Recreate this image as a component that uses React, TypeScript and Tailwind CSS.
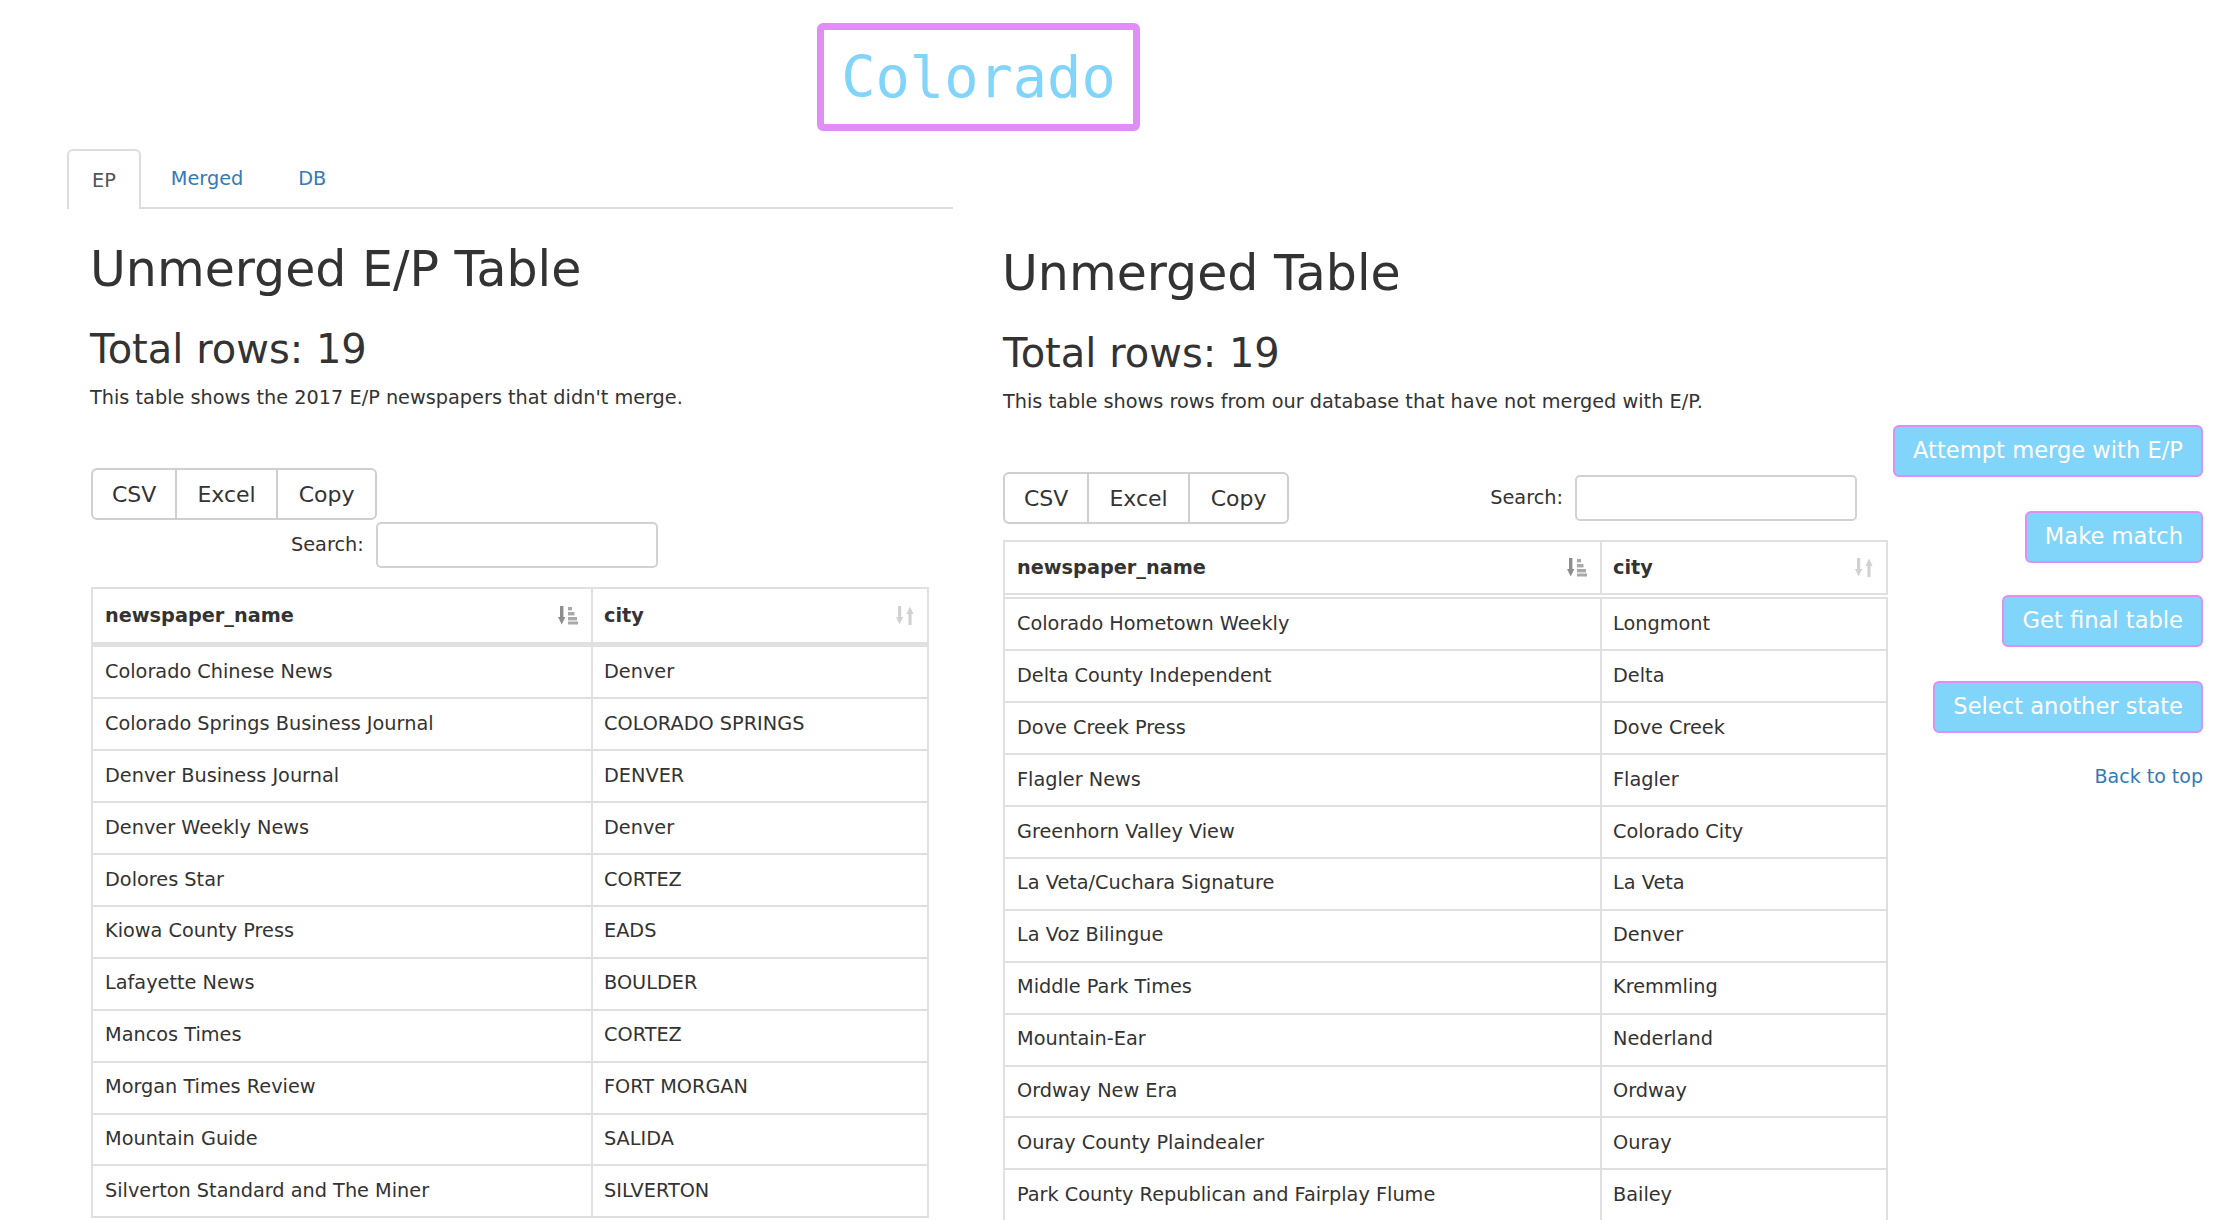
import React from "react";

const leftRows = [
  ["Colorado Chinese News", "Denver"],
  ["Colorado Springs Business Journal", "COLORADO SPRINGS"],
  ["Denver Business Journal", "DENVER"],
  ["Denver Weekly News", "Denver"],
  ["Dolores Star", "CORTEZ"],
  ["Kiowa County Press", "EADS"],
  ["Lafayette News", "BOULDER"],
  ["Mancos Times", "CORTEZ"],
  ["Morgan Times Review", "FORT MORGAN"],
  ["Mountain Guide", "SALIDA"],
  ["Silverton Standard and The Miner", "SILVERTON"],
];

const rightRows = [
  ["Colorado Hometown Weekly", "Longmont"],
  ["Delta County Independent", "Delta"],
  ["Dove Creek Press", "Dove Creek"],
  ["Flagler News", "Flagler"],
  ["Greenhorn Valley View", "Colorado City"],
  ["La Veta/Cuchara Signature", "La Veta"],
  ["La Voz Bilingue", "Denver"],
  ["Middle Park Times", "Kremmling"],
  ["Mountain-Ear", "Nederland"],
  ["Ordway New Era", "Ordway"],
  ["Ouray County Plaindealer", "Ouray"],
  ["Park County Republican and Fairplay Flume", "Bailey"],
];

const SortAscIcon = () => (
  <svg width="20" height="19" viewBox="0 0 20 19">
    <rect x="2" y="0" width="3.4" height="12" fill="#8e8e8e" />
    <polygon points="0,11 7.4,11 3.7,18.5" fill="#8e8e8e" />
    <rect x="10" y="1" width="4" height="3.4" fill="#a9a9a9" />
    <rect x="10" y="6" width="6.5" height="3.4" fill="#a9a9a9" />
    <rect x="10" y="11" width="9" height="3.4" fill="#a9a9a9" />
    <rect x="10" y="15.5" width="10" height="3" fill="#a9a9a9" />
  </svg>
);

const SortBothIcon = () => (
  <svg width="18" height="19" viewBox="0 0 18 19">
    <rect x="2" y="0" width="3.2" height="12" fill="#d2d2d2" />
    <polygon points="0,11 7.2,11 3.6,18.5" fill="#d2d2d2" />
    <rect x="12.4" y="7" width="3.2" height="12" fill="#d2d2d2" />
    <polygon points="10.4,8 17.6,8 14,0.5" fill="#d2d2d2" />
  </svg>
);

const ExportButtons = () => (
  <div className="flex h-[52px] w-fit rounded-[6px] border-2 border-[#cfcfcf] bg-white text-[22px] text-[#333]">
    <button className="px-[19px] border-r-2 border-[#cfcfcf]">CSV</button>
    <button className="px-[20px] border-r-2 border-[#cfcfcf]">Excel</button>
    <button className="px-[21px]">Copy</button>
  </div>
);

const Search = () => (
  <div className="flex items-center gap-[12px]">
    <span className="text-[19.3px]">Search:</span>
    <input className="h-[46px] w-[282px] rounded-[5px] border-2 border-[#d2d2d2] outline-none px-3" />
  </div>
);

const DataTable = ({
  rows,
  col1,
  col2,
  split,
}: {
  rows: string[][];
  col1: string;
  col2: string;
  split: boolean;
}) => (
  <div className="border-l-2 border-[#e0e0e0] text-[19.3px] text-[#333]">
    {/* header */}
    <div
      className={`flex border-t-2 border-[#e0e0e0] ${split ? "h-[55px] border-b-2" : "h-[60px] border-b-[5px] border-[#dcdcdc]"}`}
    >
      <div className={`${col1} flex items-center justify-between pl-[12px] pr-[13px] border-r-2 border-[#e0e0e0] font-bold`}>
        <span>newspaper_name</span>
        <SortAscIcon />
      </div>
      <div className={`${col2} flex items-center justify-between pl-[11px] pr-[13px] border-r-2 border-[#e0e0e0] font-bold`}>
        <span>city</span>
        <SortBothIcon />
      </div>
    </div>
    {/* body */}
    <div className={split ? "mt-[2px] border-t-2 border-[#e0e0e0]" : ""}>
      {rows.map(([name, city]) => (
        <div key={name} className="flex h-[51.9px] border-b-2 border-[#e0e0e0]">
          <div className={`${col1} flex items-center pl-[12px] border-r-2 border-[#e0e0e0]`}>{name}</div>
          <div className={`${col2} flex items-center pl-[11px] border-r-2 border-[#e0e0e0]`}>{city}</div>
        </div>
      ))}
    </div>
  </div>
);

const ActionButton = ({ label }: { label: string }) => (
  <button className="h-[52px] rounded-[6px] border-2 border-[#e08ef5] bg-[#81d4fa] px-[18px] text-[22.6px] text-white">
    {label}
  </button>
);

const App = () => {
  return (
    <div className="min-h-screen w-full bg-white text-[#333] font-['DejaVu_Sans',sans-serif] overflow-hidden">
      {/* State title */}
      <div className="pt-[23px] pl-[817px]">
        <div className="flex h-[108px] w-[323px] items-center justify-center rounded-[6px] border-[7px] border-[#e08ef5]">
          <span className="font-['DejaVu_Sans_Mono',monospace] text-[57px] leading-none text-[#81d4fa]">Colorado</span>
        </div>
      </div>

      <div className="mt-[18px] flex">
        {/* Left: tabs + E/P table */}
        <div className="ml-[67px] w-[886px]">
          <div className="flex h-[60px] border-b-2 border-[#dddddd] text-[19.3px]">
            <div className="-mb-[2px] flex items-center rounded-t-[6px] border-2 border-b-0 border-[#dddddd] bg-white px-[23px] pt-[2px] text-[#555]">
              EP
            </div>
            <div className="ml-[4px] flex items-center px-[26px] pt-[2px] text-[#337ab7]">Merged</div>
            <div className="ml-[3px] flex items-center px-[26px] pt-[2px] text-[#337ab7]">DB</div>
          </div>

          <div className="pl-[23px] pr-[24px]">
            <h1 className="mt-[34px] text-[49px] leading-[1.1] font-normal">Unmerged E/P Table</h1>
            <h2 className="mt-[30px] text-[40px] leading-[1.1] font-normal">Total rows: 19</h2>
            <p className="mt-[13px] text-[19.3px] leading-[27.6px]">
              This table shows the 2017 E/P newspapers that didn't merge.
            </p>
            <div className="mt-[57px] pl-[1px]">
              <ExportButtons />
            </div>
            <div className="mt-[2px] pl-[201px]">
              <Search />
            </div>
            <div className="mt-[19px] ml-[1px] w-[838px]">
              <DataTable rows={leftRows} col1="w-[500px]" col2="w-[336px]" split={false} />
            </div>
          </div>
        </div>

        {/* Right: DB table */}
        <div className="ml-[50px] w-[885px] pt-[98px]">
          <h1 className="text-[49px] leading-[1.1] font-normal -ml-[1px]">Unmerged Table</h1>
          <h2 className="mt-[30px] text-[40px] leading-[1.1] font-normal">Total rows: 19</h2>
          <p className="mt-[13px] text-[19.3px] leading-[27.6px]">
            This table shows rows from our database that have not merged with E/P.
          </p>
          <div className="mt-[57px] flex items-center justify-between pr-[31px]">
            <ExportButtons />
            <Search />
          </div>
          <div className="mt-[16px]">
            <DataTable rows={rightRows} col1="w-[597px]" col2="w-[286px]" split={true} />
          </div>
        </div>

        {/* Actions */}
        <div className="flex flex-1 flex-col items-end pr-[23px] pt-[276px]">
          <ActionButton label="Attempt merge with E/P" />
          <div className="mt-[34px]">
            <ActionButton label="Make match" />
          </div>
          <div className="mt-[32px]">
            <ActionButton label="Get final table" />
          </div>
          <div className="mt-[34px]">
            <ActionButton label="Select another state" />
          </div>
          <a href="#" className="mt-[30px] text-[19px] leading-[27px] text-[#337ab7]">
            Back to top
          </a>
        </div>
      </div>
    </div>
  );
};

export default App;
